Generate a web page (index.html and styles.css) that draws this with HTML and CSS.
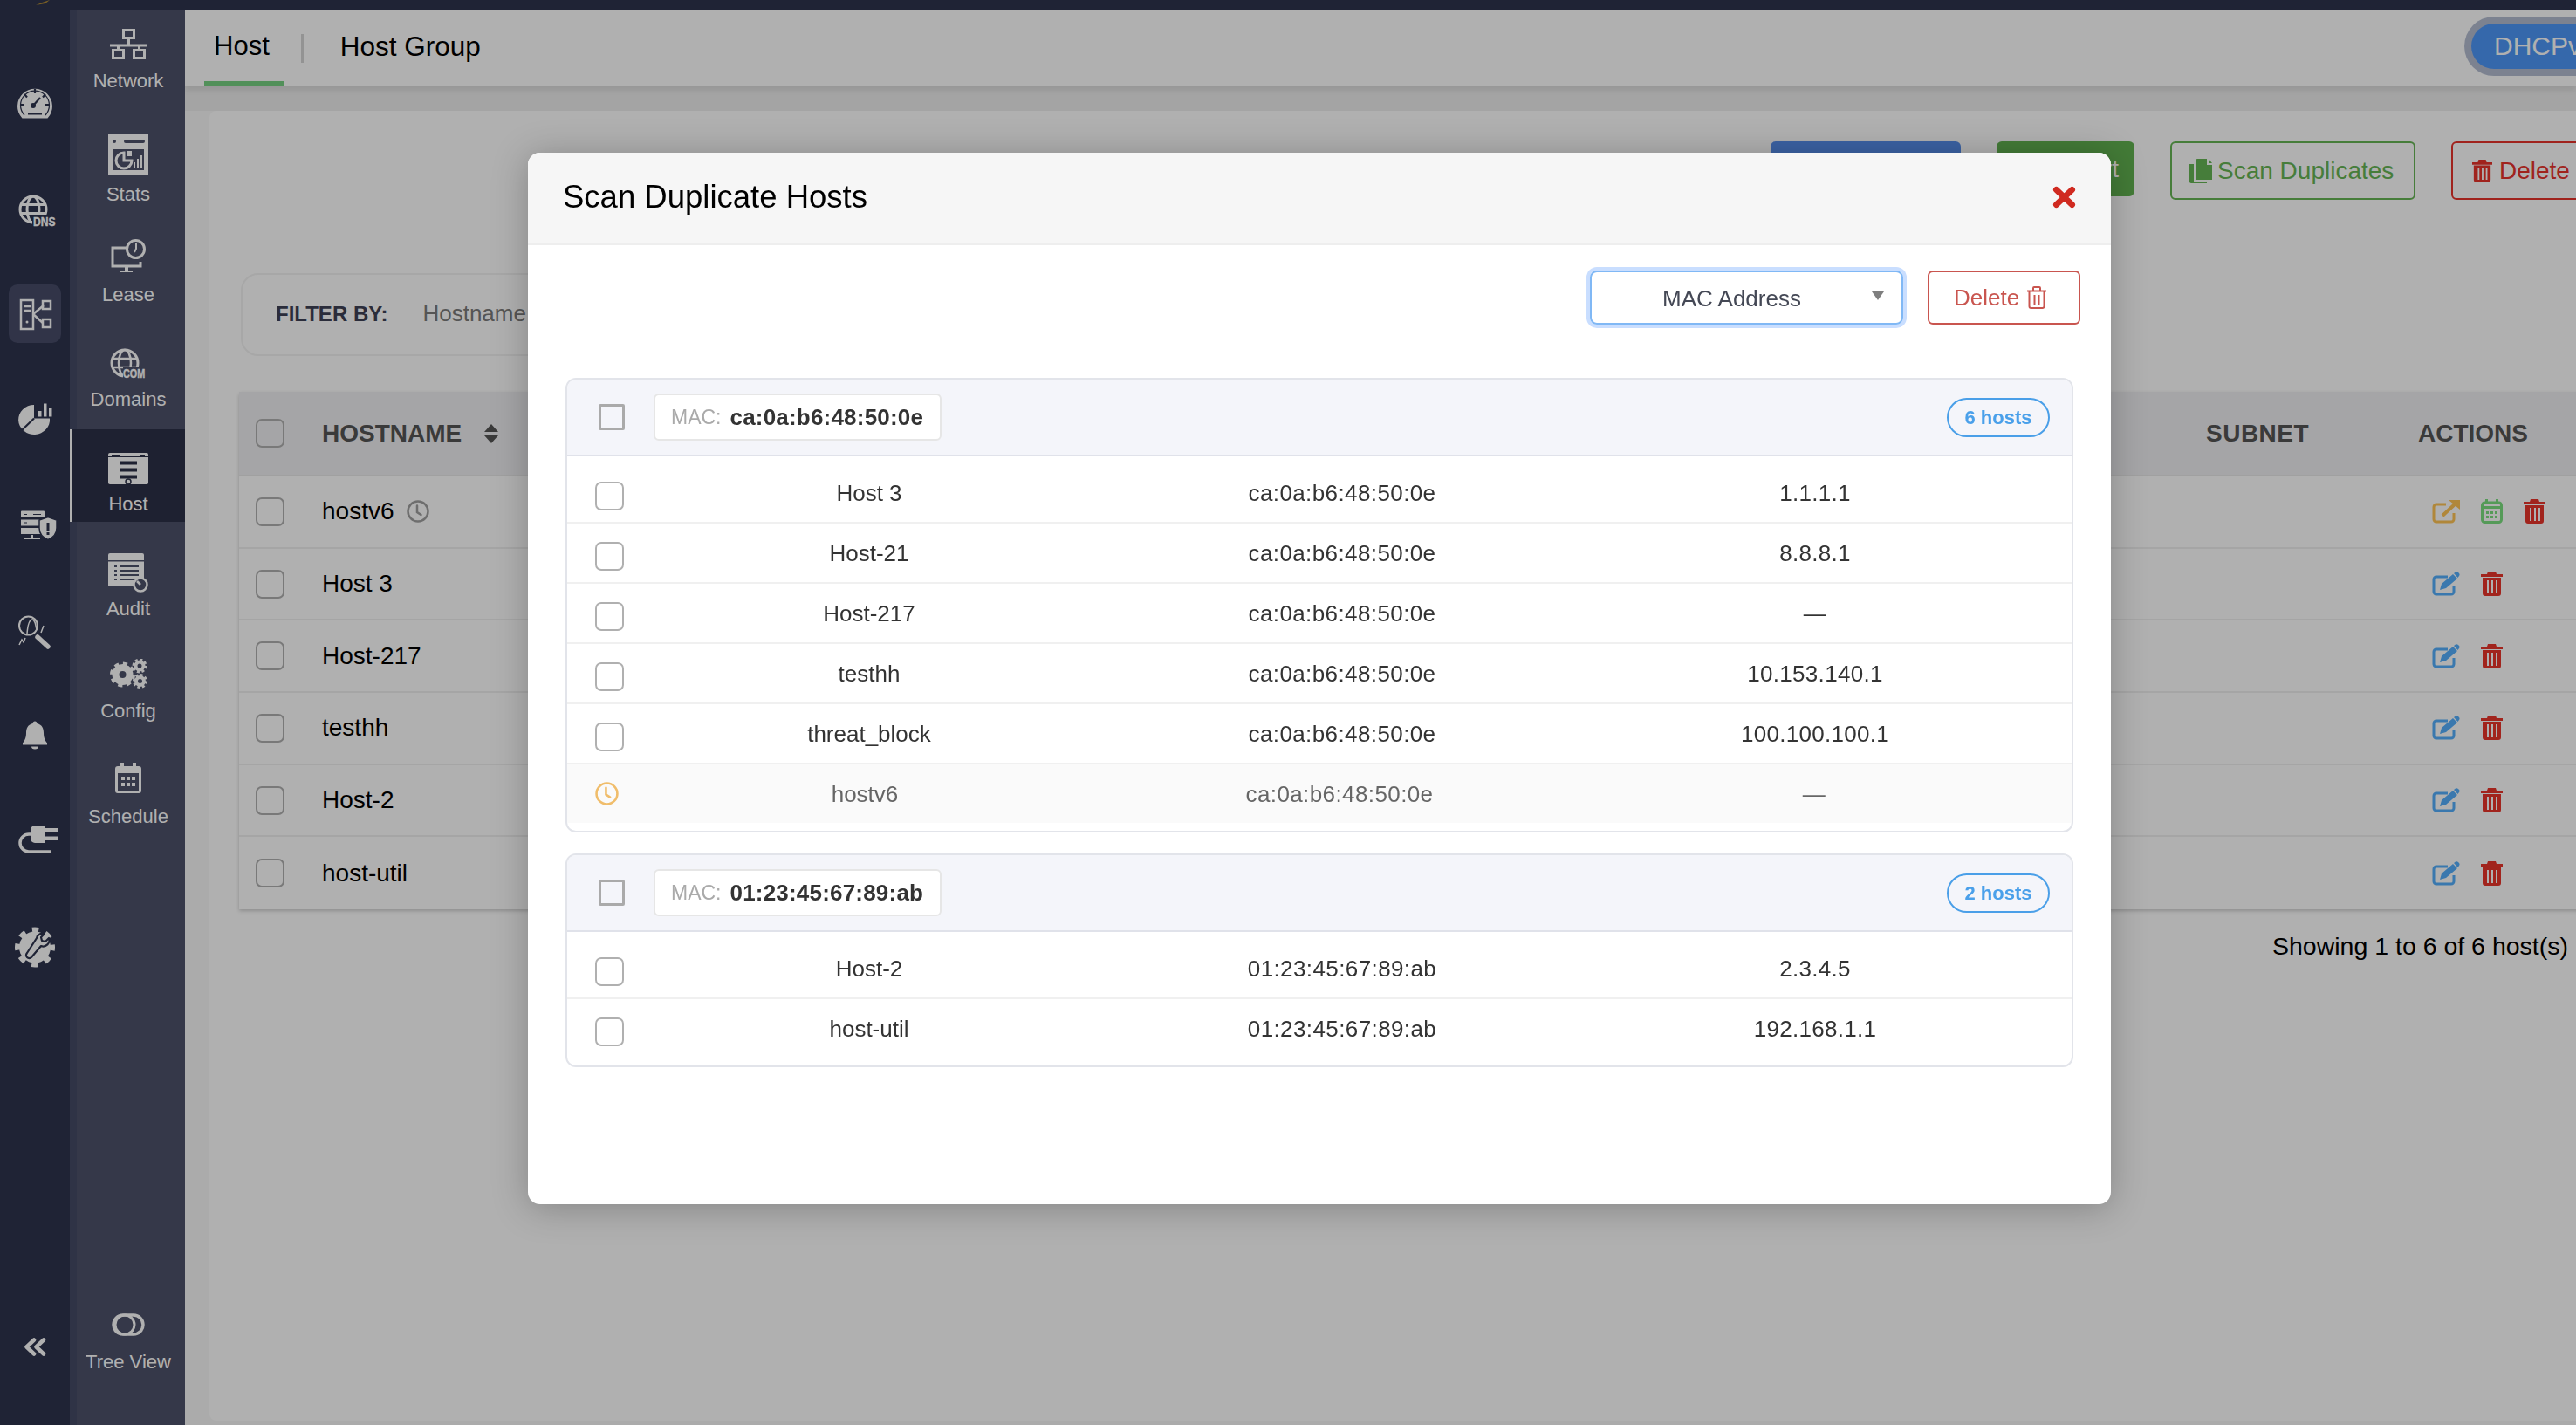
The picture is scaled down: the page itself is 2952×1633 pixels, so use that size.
FILE: index.html
```html
<!DOCTYPE html>
<html lang="en">

<head>
    <meta charset="UTF-8">
    <title>Host</title>
    <link rel="stylesheet" href="styles.css">
</head>

<body>
    <svg class="sprite" xmlns="http://www.w3.org/2000/svg">
        <symbol id="i-trash" viewBox="0 0 25 28">
            <path fill="currentColor" d="M8 0h9l1 3h7v3H0V3h7z"/>
            <path fill="currentColor" fill-rule="evenodd" d="M2 7h21v18a3 3 0 0 1-3 3H5a3 3 0 0 1-3-3zM7 10v15h2V10zM12 10v15h2V10zM17 10v15h2V10z"/>
        </symbol>
        <symbol id="i-edit" viewBox="0 0 32 28">
            <path fill="none" stroke="currentColor" stroke-width="3" d="M18 6H5a3 3 0 0 0-3 3v14a3 3 0 0 0 3 3h17a3 3 0 0 0 3-3v-7"/>
            <path fill="currentColor" d="M9 21l2-7L24 3l5 5-13 11zM25 2l2-1.500c1-.5 2-.5 3 .5l1 1c.8 1 .8 2 0 3l-1.500 2z"/>
        </symbol>
        <symbol id="i-share" viewBox="0 0 32 28">
            <path fill="none" stroke="currentColor" stroke-width="3" d="M16 6H5a3 3 0 0 0-3 3v14a3 3 0 0 0 3 3h17a3 3 0 0 0 3-3v-7"/>
            <path fill="none" stroke="currentColor" stroke-width="4" d="M12 19L26 6"/>
            <path fill="currentColor" d="M19 1h13v11z"/>
        </symbol>
        <symbol id="i-cal" viewBox="0 0 25 28">
            <path fill="currentColor" d="M5 0h3v5H5zM17 0h3v5h-3z"/>
            <rect x="1.500" y="4" width="22" height="22.500" rx="3" fill="none" stroke="currentColor" stroke-width="3"/>
            <path fill="currentColor" d="M2 8h21v3H2zM6 14h3v3H6zM11 14h3v3h-3zM16 14h3v3h-3zM6 19h3v3H6zM11 19h3v3h-3zM16 19h3v3h-3z"/>
        </symbol>
        <symbol id="i-clock" viewBox="0 0 26 26">
            <circle cx="13" cy="13" r="11.500" fill="none" stroke="currentColor" stroke-width="2.500"/>
            <path fill="none" stroke="currentColor" stroke-width="2.500" stroke-linecap="round" d="M12 6.500V14l4.500 3"/>
        </symbol>
        <symbol id="i-check-empty" viewBox="0 0 33 33">
            <rect x="1" y="1" width="31" height="31" rx="6" fill="none" stroke="currentColor" stroke-width="2"/>
        </symbol>
    </svg>

    <div class="topbar">
        <svg class="logo-tip" width="18" height="6" viewBox="0 0 18 6"><path d="M0 6L7 3 16 0 11 4z" fill="#b08a35"/></svg>
    </div>

    <div class="app">
        <!-- rail -->
        <div class="rail">
            <div class="rail-btn">
                <svg class="rail-icon" viewBox="0 0 60 60">
                    <path d="M15.500 47.500a20 20 0 1 1 29 0z" fill="currentColor"/>
                    <path class="knock-line-thin" d="M18 44a16.500 16.500 0 1 1 24 0"/>
                    <path class="knock-line" d="M30 14v5M18 20l3 3.500M42 20l-3 3.500M13 32h5M42 32h5M22 42.500h16"/>
                    <path class="knock-line" d="M28 33l8-9"/>
                    <circle class="knock-fill" cx="28" cy="33" r="3"/>
                </svg>
            </div>
            <div class="rail-btn">
                <svg class="rail-icon" viewBox="0 0 60 60">
                    <circle cx="28" cy="31" r="15" fill="none" stroke="currentColor" stroke-width="3"/>
                    <ellipse cx="28" cy="31" rx="7" ry="15" fill="none" stroke="currentColor" stroke-width="3"/>
                    <path d="M14 25.500h28M14 35.500h28" stroke="currentColor" stroke-width="3"/>
                    <rect class="knock-rail" x="27" y="37" width="27" height="15"/>
                    <text class="icon-word" transform="translate(28 49.500) scale(0.78 1)">DNS</text>
                </svg>
            </div>
            <div class="rail-btn is-active">
                <svg class="rail-icon" viewBox="0 0 60 60">
                    <rect x="14" y="14" width="14" height="33" fill="none" stroke="currentColor" stroke-width="2.500"/>
                    <path d="M17 21h8M17 26h8M28 30L40 20M28 30l11 10" fill="none" stroke="currentColor" stroke-width="2.500"/>
                    <circle cx="21" cy="39" r="1.500" fill="currentColor"/>
                    <rect x="39" y="15" width="9" height="9" fill="none" stroke="currentColor" stroke-width="2.500"/>
                    <rect x="39" y="36" width="9" height="9" fill="none" stroke="currentColor" stroke-width="2.500"/>
                </svg>
            </div>
            <div class="rail-btn">
                <svg class="rail-icon" viewBox="0 0 60 60">
                    <path d="M29 13A18 17 0 1 0 47 28.500H29z" fill="currentColor"/>
                    <path class="knock-line" d="M29 28.500L15 42"/>
                    <path d="M34 20h3.500v6.500H34zM40 11.500h3.500v15H40zM46 16h3.500v10.500H46z" fill="currentColor"/>
                </svg>
            </div>
            <div class="rail-btn">
                <svg class="rail-icon" viewBox="0 0 60 60">
                    <path d="M15 13.500h25a1 1 0 0 1 1 1v6.500H14v-6.500a1 1 0 0 1 1-1zM14 23.500h24l-1 7H14zM14 33h22l2 7H14zM25 41h3v3h8v2H17v-2h8z" fill="currentColor"/>
                    <path class="knock-line-thin" d="M18 17.500h3M28 17.500h9M18 27h3M18 36.500h3"/>
                    <path d="M45 20.500l10 3.500v9c0 7-4 11-10 13.500-6-2.500-10-6.500-10-13.500v-9z" fill="currentColor" stroke="#2d334e" stroke-width="1.500"/>
                    <path class="knock-fill" d="M43.500 27h3v9h-3zM43.500 38h3v3h-3z"/>
                </svg>
            </div>
            <div class="rail-btn">
                <svg class="rail-icon" viewBox="0 0 60 60">
                    <circle cx="22.500" cy="24" r="10.500" fill="none" stroke="currentColor" stroke-width="2"/>
                    <path d="M21 33c1-12 3-16 6-16 3 0 4 6 5 12M12 46l3-6 2 3 2-5M37 32l3-8" fill="none" stroke="currentColor" stroke-width="1.500"/>
                    <path d="M33 37l12 11" stroke="currentColor" stroke-width="5.500" stroke-linecap="round"/>
                </svg>
            </div>
            <div class="rail-btn">
                <svg class="rail-icon" viewBox="0 0 60 60">
                    <path d="M30 12.500c-1.500 0-2.500 1-2.500 2.500-6 1.500-7.500 6-7.500 11 0 6-2 9-4 11.500v2h28v-2c-2-2.500-4-5.500-4-11.500 0-5-1.500-9.500-7.500-11 0-1.500-1-2.500-2.500-2.500z" fill="currentColor"/>
                    <path d="M26 41.500h8a4 3 0 0 1-8 0z" fill="currentColor"/>
                </svg>
            </div>
            <div class="rail-btn">
                <svg class="rail-icon" viewBox="0 0 60 60">
                    <path d="M30 11h12v20H30a5 5 0 0 1-5-5v-10a5 5 0 0 1 5-5zM42 14h14v4.500H42zM42 23.500h14V28H42z" fill="currentColor"/>
                    <path d="M25 21h-2a10 10 0 0 0 0 20h26" fill="none" stroke="currentColor" stroke-width="3.500"/>
                </svg>
            </div>
            <div class="rail-btn">
                <svg class="rail-icon" viewBox="0 0 60 60">
                    <circle cx="30" cy="29.500" r="18" fill="currentColor"/>
                    <circle cx="30" cy="29.500" r="20" fill="none" stroke="currentColor" stroke-width="6" stroke-dasharray="7.500 8.200" stroke-dashoffset="3.750"/>
                    <path d="M32 19a7 7 0 0 1 9-5l-4 4 1 4 4 1 4-4a7 7 0 0 1-9 9L26 41a3.500 3.500 0 0 1-5-5z" fill="currentColor" stroke="#2d334e" stroke-width="2.200" stroke-linejoin="round"/>
                </svg>
            </div>
            <svg class="rail-collapse" width="26" height="21" viewBox="0 0 26 21">
                <path d="M12 2.500L3.500 10.500l8.500 8M23 2.500l-8.500 8 8.500 8" fill="none" stroke="currentColor" stroke-width="4.500" stroke-linecap="round" stroke-linejoin="round"/>
            </svg>
        </div>

        <!-- segundo menu -->
        <div class="subnav">
            <div class="sub-item sub-network">
                <svg width="43" height="35" viewBox="0 0 43 35">
                    <path d="M15.500 1.500h12v9h-12zM3.500 24.500h12v9h-12zM27.500 24.500h12v9h-12z" fill="none" stroke="currentColor" stroke-width="3"/>
                    <path d="M21.500 11v8M0 19h43M9.500 19v6M33.500 19v6" fill="none" stroke="currentColor" stroke-width="3"/>
                </svg>
                <span>Network</span>
            </div>
            <div class="sub-item sub-stats">
                <svg width="46" height="46" viewBox="0 0 46 46">
                    <rect width="46" height="46" fill="currentColor"/>
                    <circle cx="7" cy="8" r="2" class="knock-sub-fill"/>
                    <rect x="18" y="6" width="24" height="4" rx="2" class="knock-sub-fill"/>
                    <rect x="5" y="17" width="36" height="24" class="knock-sub-fill"/>
                    <path d="M18 21a9 9 0 1 0 9 9h-9z" fill="none" stroke="currentColor" stroke-width="3"/>
                    <path d="M21 19h6v6h-6zM29 32h2v7h-2zM33 28h2v11h-2zM37 24h2v15h-2z" fill="currentColor"/>
                </svg>
                <span>Stats</span>
            </div>
            <div class="sub-item sub-lease">
                <svg width="40" height="40" viewBox="0 0 40 40">
                    <path d="M18 10H2v21h32v-5" fill="none" stroke="currentColor" stroke-width="3"/>
                    <path d="M16 32h4v4h5v2h-14v-2h5z" fill="currentColor"/>
                    <circle cx="28.500" cy="11.500" r="10" fill="none" stroke="currentColor" stroke-width="3"/>
                    <path d="M29 5v6l-2 4" fill="none" stroke="currentColor" stroke-width="2"/>
                </svg>
                <span>Lease</span>
            </div>
            <div class="sub-item sub-domains">
                <svg width="42" height="34" viewBox="0 0 42 34">
                    <circle cx="17" cy="16" r="15" fill="none" stroke="currentColor" stroke-width="3"/>
                    <ellipse cx="17" cy="16" rx="7" ry="15" fill="none" stroke="currentColor" stroke-width="2.500"/>
                    <path d="M3 11h28M3 21h28" stroke="currentColor" stroke-width="2.500"/>
                    <rect class="knock-sub-fill" x="15" y="20" width="27" height="14"/>
                    <text class="icon-word" transform="translate(15 33) scale(0.7 1)">COM</text>
                </svg>
                <span>Domains</span>
            </div>
            <div class="sub-item sub-host is-active">
                <svg width="46" height="37" viewBox="0 0 46 37">
                    <rect width="46" height="36" rx="2" fill="currentColor"/>
                    <path class="knock-dark" d="M0 4h46v1H0zM13 9.500h20v4H13zM13 17.500h20v4H13zM13 25.500h20v4H13zM4 2h9v1H4zM36 2h6v1h-6z"/>
                    <circle cx="23" cy="33" r="3" fill="currentColor" stroke="#2c3048" stroke-width="1.500"/>
                </svg>
                <span>Host</span>
            </div>
            <div class="sub-item sub-audit">
                <svg width="46" height="45" viewBox="0 0 46 45">
                    <path d="M2 0h37a2 2 0 0 1 2 2v36H0V2a2 2 0 0 1 2-2z" fill="currentColor"/>
                    <path class="knock-sub-fill" d="M0 8h41v1.500H0zM7 14h3v2H7zM13 14h22v2H13zM7 19h3v2H7zM13 19h22v2H13zM7 24h3v2H7zM13 24h22v2H13zM7 29h3v2H7zM13 29h22v2H13z"/>
                    <circle cx="37" cy="36" r="7.500" class="knock-sub-fill" stroke="currentColor" stroke-width="2.500"/>
                    <path d="M33 32l4 4" stroke="currentColor" stroke-width="2.500"/>
                </svg>
                <span>Audit</span>
            </div>
            <div class="sub-item sub-config">
                <svg width="43" height="34" viewBox="0 0 43 34">
                    <circle cx="14.500" cy="18" r="8" fill="none" stroke="currentColor" stroke-width="8"/>
                    <circle cx="14.500" cy="18" r="12.500" fill="none" stroke="currentColor" stroke-width="4" stroke-dasharray="5 4.820"/>
                    <circle cx="34" cy="8" r="4.500" fill="none" stroke="currentColor" stroke-width="4"/>
                    <circle cx="34" cy="8" r="7" fill="none" stroke="currentColor" stroke-width="3" stroke-dasharray="3 2.500"/>
                    <circle cx="34.500" cy="25.500" r="4.500" fill="none" stroke="currentColor" stroke-width="4"/>
                    <circle cx="34.500" cy="25.500" r="7" fill="none" stroke="currentColor" stroke-width="3" stroke-dasharray="3 2.500"/>
                </svg>
                <span>Config</span>
            </div>
            <div class="sub-item sub-schedule">
                <svg width="30" height="35" viewBox="0 0 30 35">
                    <path d="M6 0h4v4h10V0h4v4h3a3 3 0 0 1 3 3v25a3 3 0 0 1-3 3H3a3 3 0 0 1-3-3V7a3 3 0 0 1 3-3h3z" fill="currentColor"/>
                    <rect class="knock-sub-fill" x="3" y="12" width="24" height="20"/>
                    <path d="M7 16h4v4H7zM13 16h4v4h-4zM19 16h4v4h-4zM7 23h4v4H7zM13 23h4v4h-4zM19 23h4v4h-4z" fill="currentColor"/>
                </svg>
                <span>Schedule</span>
            </div>
            <div class="sub-item sub-tree">
                <svg width="38" height="26" viewBox="0 0 38 26">
                    <rect x="2" y="2" width="34" height="22" rx="11" fill="none" stroke="currentColor" stroke-width="3.500"/>
                    <circle cx="15" cy="13" r="11" fill="none" stroke="currentColor" stroke-width="3"/>
                </svg>
                <span>Tree View</span>
            </div>
        </div>

        <div class="main">
            <div class="header">
                <div class="tab tab-active">Host</div>
                <div class="tab-sep"></div>
                <div class="tab tab-group">Host Group</div>
                <div class="pill">DHCPv4</div>
            </div>

            <div class="panel">
                <div class="toolbar">
                    <div class="btn btn-blue">Add Host</div>
                    <div class="btn btn-green">Import</div>
                    <div class="btn btn-line-green">
                        <svg width="26" height="28" viewBox="0 0 26 28"><path d="M9 0h11v7h6v17H7V2a2 2 0 0 1 2-2zM22 0l4 5h-4zM0 6h5v20h15v2H2a2 2 0 0 1-2-2z" fill="currentColor"/></svg>
                        Scan Duplicates
                    </div>
                    <div class="btn btn-line-red">
                        <svg width="23" height="28"><use href="#i-trash"/></svg>
                        Delete
                    </div>
                </div>

                <div class="filter">
                    <b>FILTER BY:</b>
                    <span>Hostname</span>
                </div>

                <div class="hosts">
                    <div class="t-row t-head">
                        <div><svg class="check"><use href="#i-check-empty"/></svg></div>
                        <div class="sort-cell">HOSTNAME
                            <svg width="16" height="22" viewBox="0 0 16 22"><path d="M8 0l8 9H0zM0 13h16l-8 9z" fill="currentColor"/></svg>
                        </div>
                        <div class="th-subnet">SUBNET</div>
                        <div>ACTIONS</div>
                    </div>
                    <div class="t-row">
                        <div><svg class="check"><use href="#i-check-empty"/></svg></div>
                        <div class="name-cell">hostv6 <svg class="name-clock"><use href="#i-clock"/></svg></div>
                        <div></div>
                        <div class="actions">
                            <svg class="act-wide a-orange"><use href="#i-share"/></svg>
                            <svg class="act a-green"><use href="#i-cal"/></svg>
                            <svg class="act a-red"><use href="#i-trash"/></svg>
                        </div>
                    </div>
                    <div class="t-row">
                        <div><svg class="check"><use href="#i-check-empty"/></svg></div>
                        <div>Host 3</div>
                        <div></div>
                        <div class="actions">
                            <svg class="act-wide a-blue"><use href="#i-edit"/></svg>
                            <svg class="act a-red"><use href="#i-trash"/></svg>
                        </div>
                    </div>
                    <div class="t-row">
                        <div><svg class="check"><use href="#i-check-empty"/></svg></div>
                        <div>Host-217</div>
                        <div></div>
                        <div class="actions">
                            <svg class="act-wide a-blue"><use href="#i-edit"/></svg>
                            <svg class="act a-red"><use href="#i-trash"/></svg>
                        </div>
                    </div>
                    <div class="t-row">
                        <div><svg class="check"><use href="#i-check-empty"/></svg></div>
                        <div>testhh</div>
                        <div></div>
                        <div class="actions">
                            <svg class="act-wide a-blue"><use href="#i-edit"/></svg>
                            <svg class="act a-red"><use href="#i-trash"/></svg>
                        </div>
                    </div>
                    <div class="t-row">
                        <div><svg class="check"><use href="#i-check-empty"/></svg></div>
                        <div>Host-2</div>
                        <div></div>
                        <div class="actions">
                            <svg class="act-wide a-blue"><use href="#i-edit"/></svg>
                            <svg class="act a-red"><use href="#i-trash"/></svg>
                        </div>
                    </div>
                    <div class="t-row">
                        <div><svg class="check"><use href="#i-check-empty"/></svg></div>
                        <div>host-util</div>
                        <div></div>
                        <div class="actions">
                            <svg class="act-wide a-blue"><use href="#i-edit"/></svg>
                            <svg class="act a-red"><use href="#i-trash"/></svg>
                        </div>
                    </div>
                </div>
                <div class="showing">Showing 1 to 6 of 6 host(s)</div>
            </div>
        </div>
    </div>

    <div class="backdrop"></div>

    <!-- modal -->
    <div class="modal">
        <div class="modal-header">
            <h2>Scan Duplicate Hosts</h2>
            <svg class="modal-close" width="27" height="26" viewBox="0 0 27 26">
                <path d="M4.500 4.500l18 17M22.500 4.500l-18 17" fill="none" stroke="currentColor" stroke-width="7" stroke-linecap="round"/>
            </svg>
        </div>
        <div class="modal-body">
            <div class="modal-tools">
                <div class="select">MAC Address<i class="caret"></i></div>
                <div class="btn-delete">Delete
                    <svg width="24" height="26" viewBox="0 0 24 26">
                        <path d="M1 5.500h22M8 5V2a1 1 0 0 1 1-1h6a1 1 0 0 1 1 1v3M3.500 6v17a2 2 0 0 0 2 2h13a2 2 0 0 0 2-2V6M9.500 10v11M14.500 10v11" fill="none" stroke="currentColor" stroke-width="2"/>
                    </svg>
                </div>
            </div>

            <div class="dup-group">
                <div class="dup-head">
                    <i class="head-check"></i>
                    <div class="chip"><span>MAC:</span><b>ca:0a:b6:48:50:0e</b></div>
                    <div class="count">6 hosts</div>
                </div>
                <div class="dup-rows">
                    <div class="dup-row"><svg class="check"><use href="#i-check-empty"/></svg><div>Host 3</div><div>ca:0a:b6:48:50:0e</div><div>1.1.1.1</div></div>
                    <div class="dup-row"><svg class="check"><use href="#i-check-empty"/></svg><div>Host-21</div><div>ca:0a:b6:48:50:0e</div><div>8.8.8.1</div></div>
                    <div class="dup-row"><svg class="check"><use href="#i-check-empty"/></svg><div>Host-217</div><div>ca:0a:b6:48:50:0e</div><div>—</div></div>
                    <div class="dup-row"><svg class="check"><use href="#i-check-empty"/></svg><div>testhh</div><div>ca:0a:b6:48:50:0e</div><div>10.153.140.1</div></div>
                    <div class="dup-row"><svg class="check"><use href="#i-check-empty"/></svg><div>threat_block</div><div>ca:0a:b6:48:50:0e</div><div>100.100.100.1</div></div>
                    <div class="dup-row is-pending"><svg class="pending-clock"><use href="#i-clock"/></svg><div>hostv6</div><div>ca:0a:b6:48:50:0e</div><div>—</div></div>
                </div>
            </div>

            <div class="dup-group">
                <div class="dup-head">
                    <i class="head-check"></i>
                    <div class="chip"><span>MAC:</span><b>01:23:45:67:89:ab</b></div>
                    <div class="count">2 hosts</div>
                </div>
                <div class="dup-rows">
                    <div class="dup-row"><svg class="check"><use href="#i-check-empty"/></svg><div>Host-2</div><div>01:23:45:67:89:ab</div><div>2.3.4.5</div></div>
                    <div class="dup-row"><svg class="check"><use href="#i-check-empty"/></svg><div>host-util</div><div>01:23:45:67:89:ab</div><div>192.168.1.1</div></div>
                </div>
            </div>
        </div>
    </div>
</body>

</html>
```

FILE: styles.css
```css
/* Reset */
* {
    box-sizing: border-box;
}

html,
body {
    margin: 0;
    height: 100%;
    overflow: hidden;
}

body {
    font-family: "Liberation Sans", Arial, sans-serif;
    color: #000;
    background-color: #f8f8f8;
}

.sprite {
    display: none;
}

svg {
    flex: none;
    display: block;
}

/* Barra do topo */
.topbar {
    height: 11px;
    background-color: #2d334e;
    position: relative;
}

.logo-tip {
    position: absolute;
    left: 41px;
    top: 0;
}

.app {
    display: flex;
    height: 1622px;
}

/* Rail */
.rail {
    width: 80px;
    flex: none;
    background-color: #2d334e;
    color: #fff;
    display: flex;
    flex-direction: column;
    align-items: center;
    padding-top: 46px;
    padding-bottom: 79px;
}

.rail-btn {
    width: 60px;
    height: 121px;
    display: flex;
    align-items: center;
    justify-content: center;
    position: relative;
}

.rail-btn.is-active::before {
    content: '';
    position: absolute;
    left: 0;
    top: 27px;
    width: 60px;
    height: 67px;
    border-radius: 10px;
    background-color: #474c69;
}

.rail-icon {
    width: 60px;
    height: 60px;
    position: relative;
}

.rail-collapse {
    margin-top: auto;
}

.icon-word {
    font-family: "Liberation Sans", sans-serif;
    font-weight: 700;
    font-size: 15.500px;
    fill: currentColor;
    stroke: currentColor;
    stroke-width: 0.4;
}

.knock-rail,
.knock-fill {
    fill: #2d334e;
}

.knock-line {
    stroke: #2d334e;
    stroke-width: 2.2;
    fill: none;
}

.knock-line-thin {
    stroke: #2d334e;
    stroke-width: 1.2;
    fill: none;
}

/* Segundo menu */
.subnav {
    width: 132px;
    flex: none;
    background: linear-gradient(90deg, #454a66 0, #454a66 8px, #4d516a 8px);
    color: #fff;
    display: flex;
    flex-direction: column;
    font-size: 22px;
}

.sub-item {
    display: flex;
    flex-direction: column;
    align-items: center;
    line-height: 26px;
    padding-left: 2px;
}

.sub-network {
    height: 122px;
    padding-top: 22px;
}

.sub-network svg {
    margin-bottom: 12px;
}

.sub-stats {
    height: 125px;
    padding-top: 21px;
}

.sub-stats svg {
    margin-bottom: 10px;
}

.sub-lease {
    height: 117px;
    padding-top: 16px;
}

.sub-lease svg {
    margin-bottom: 11px;
}

.sub-domains {
    height: 117px;
    padding-top: 25px;
}

.sub-domains svg {
    margin-bottom: 11px;
    overflow: visible;
}

.sub-host {
    height: 106px;
    padding-top: 27px;
}

.sub-host svg {
    margin-bottom: 9px;
}

.sub-item.is-active {
    background-color: #2c3048;
    border-left: 3px solid #fff;
    padding-left: 0;
    padding-right: 1px;
}

.sub-audit {
    height: 137px;
    padding-top: 36px;
}

.sub-audit svg {
    margin-bottom: 6px;
}

.sub-config {
    height: 120px;
    padding-top: 20px;
}

.sub-config svg {
    margin-bottom: 13px;
}

.sub-schedule {
    height: 130px;
    padding-top: 19px;
}

.sub-schedule svg {
    margin-bottom: 14px;
}

.sub-tree {
    margin-top: auto;
    padding-bottom: 59px;
}

.sub-tree svg {
    margin-bottom: 17px;
}

.knock-sub-fill {
    fill: #4d516a;
}

.knock-dark {
    fill: #2c3048;
}

/* Conteudo */
.main {
    flex: 1;
    min-width: 0;
    overflow: hidden;
    background: linear-gradient(#eeeeee 0, #eeeeee 116px, #f8f8f8 116px);
}

.header {
    height: 88px;
    background-color: #fff;
    display: flex;
    align-items: center;
    padding-left: 22px;
    font-size: 31.500px;
    box-shadow: 0 5px 6px rgba(0, 0, 0, 0.08);
    position: relative;
}

.tab {
    height: 88px;
    line-height: 84px;
    padding: 0 17px 0 11px;
    white-space: nowrap;
}

.tab-active {
    border-bottom: 6px solid #77d183;
    font-size: 31px;
}

.tab-sep {
    width: 3px;
    height: 33px;
    margin-left: 19px;
    background-color: #d5d5d5;
}

.tab-group {
    margin-left: 31px;
}

.pill {
    margin-left: auto;
    margin-right: -50px;
    margin-bottom: 4px;
    width: 170px;
    height: 52px;
    border-radius: 26px;
    background-color: #4e97f8;
    box-shadow: 0 0 0 8px #b4bdd1;
    color: #fff;
    font-size: 30px;
    line-height: 52px;
    padding-left: 26px;
}

.panel {
    width: 2769px;
    height: 1501px;
    margin: 28px 0 0 28px;
    padding: 35px 34px 0;
    background-color: #fff;
    border-radius: 8px;
}

.toolbar {
    display: flex;
    justify-content: flex-end;
    align-items: flex-start;
    gap: 41px;
    font-size: 28px;
}

.btn {
    height: 67px;
    border-radius: 6px;
    display: flex;
    align-items: center;
    gap: 8px;
    padding: 0 22px;
    white-space: nowrap;
}

.btn-blue {
    width: 218px;
    height: 63px;
    justify-content: center;
    color: #fff;
    background-color: #568eec;
}

.btn-green {
    width: 158px;
    height: 63px;
    justify-content: flex-end;
    padding-right: 18px;
    color: #fff;
    background-color: #61b250;
}

.btn-line-green {
    width: 281px;
    gap: 6px;
    padding-left: 20px;
    color: #66b555;
    border: 2px solid #66b555;
}

.btn-line-red {
    width: 166px;
    color: #e8332b;
    border: 2px solid #e8332b;
}

.filter {
    width: 1000px;
    height: 95px;
    margin: 84px 0 0 2px;
    padding: 0 0 2px 38px;
    display: flex;
    align-items: center;
    gap: 40px;
    border: 2px solid #f2f2f2;
    border-radius: 20px;
}

.filter b {
    font-size: 24px;
    color: #3d4154;
}

.filter span {
    font-size: 26px;
    color: #7b7b7b;
}

.hosts {
    margin-top: 41px;
    font-size: 28px;
    box-shadow: 0 2px 4px rgba(0, 0, 0, 0.2);
    border-radius: 4px 4px 0 0;
}

.t-row {
    display: grid;
    grid-template-columns: 95px 2159px 243px 1fr;
    align-items: center;
    height: 82.700px;
    border-bottom: 2px solid #f0f0f0;
}

.t-row:last-child {
    border-bottom: 0;
}

.t-row>div:first-child {
    padding-left: 19px;
}

.t-head {
    height: 97px;
    background-color: #f0f0f2;
    border-bottom: 2px solid #e8e8e8;
    font-weight: 700;
    color: #555;
}

.th-subnet {
    letter-spacing: 0.5px;
}

.check {
    width: 33px;
    height: 33px;
    color: #b0b0b0;
}

.sort-cell {
    display: flex;
    align-items: center;
    gap: 26px;
}

.name-cell {
    display: flex;
    align-items: center;
    gap: 14px;
}

.name-clock {
    width: 26px;
    height: 26px;
    color: #a0a0a0;
}

.actions {
    display: flex;
    align-items: center;
    gap: 24px;
    padding-left: 16px;
}

.act {
    width: 25px;
    height: 28px;
}

.act-wide {
    width: 32px;
    height: 28px;
}

.a-orange {
    color: #ffc454;
}

.a-green {
    color: #7bdf80;
}

.a-red {
    color: #ea352a;
}

.a-blue {
    color: #54affc;
}

.showing {
    margin-top: 26px;
    padding-right: 32px;
    text-align: right;
    font-size: 28.500px;
}

/* Modal */
.backdrop {
    position: fixed;
    inset: 0;
    background: rgba(0, 0, 0, 0.31);
}

.modal {
    position: absolute;
    left: 605px;
    top: 175px;
    width: 1814px;
    height: 1205px;
    background-color: #fff;
    border-radius: 14px;
    box-shadow: 0 4px 40px rgba(0, 0, 0, 0.25);
    overflow: hidden;
}

.modal-header {
    height: 106px;
    background-color: #f6f6f6;
    border-bottom: 2px solid #eeeeee;
    display: flex;
    align-items: center;
    justify-content: space-between;
    padding: 0 40px 3px;
}

.modal-header h2 {
    margin: 0;
    font-size: 36.500px;
    font-weight: 400;
}

.modal-close {
    color: #d02a20;
}

.modal-body {
    padding: 29px 35px 0 43px;
}

.modal-tools {
    display: flex;
    justify-content: flex-end;
    gap: 28px;
    margin-bottom: 61px;
}

.select {
    width: 359px;
    height: 62px;
    display: flex;
    align-items: center;
    padding: 2px 20px 0 81px;
    font-size: 26px;
    color: #444855;
    border: 2px solid #80b8f5;
    border-radius: 8px;
    box-shadow: 0 0 0 4px #c9deff;
}

.caret {
    margin-left: auto;
    margin-bottom: 6px;
    width: 0;
    height: 0;
    border-left: 7px solid transparent;
    border-right: 7px solid transparent;
    border-top: 10px solid #7f7f7f;
}

.btn-delete {
    width: 175px;
    height: 62px;
    display: flex;
    align-items: center;
    gap: 8px;
    padding-left: 28px;
    font-size: 26px;
    color: #c9554f;
    border: 2px solid #c9554f;
    border-radius: 6px;
}

.dup-group {
    width: 1728px;
    border: 2px solid #e2e4ea;
    border-radius: 12px;
    margin-bottom: 24px;
    overflow: hidden;
}

.dup-head {
    height: 88px;
    display: flex;
    align-items: center;
    background-color: #f4f5fa;
    border-bottom: 2px solid #e0e2ea;
    padding: 0 25px 0 36px;
}

.head-check {
    width: 30px;
    height: 30px;
    border: 3px solid #aaa;
    border-radius: 2px;
    margin-right: 33px;
}

.chip {
    height: 54px;
    width: 330px;
    display: flex;
    align-items: center;
    gap: 10px;
    padding-left: 18px;
    background-color: #fff;
    border: 2px solid #e6e6e6;
    border-radius: 6px;
}

.chip span {
    font-size: 23px;
    color: #aaa;
}

.chip b {
    font-size: 26px;
    letter-spacing: 0.2px;
    color: #333;
}

.count {
    margin-left: auto;
    height: 45px;
    width: 118px;
    text-align: center;
    line-height: 41px;
    font-size: 22px;
    font-weight: 700;
    color: #4aa0ea;
    border: 2px solid #4a9fe8;
    border-radius: 23px;
}

.dup-rows {
    padding: 8px 0 9px;
}

.dup-row {
    display: flex;
    align-items: center;
    height: 69px;
    padding: 0 23px 0 32px;
    font-size: 26px;
    color: #333;
    border-bottom: 2px solid #f0f0f0;
}

.dup-row:last-child {
    height: 67px;
    border-bottom: 0;
}

.dup-row>div {
    flex: 1;
    text-align: center;
    padding-top: 1px;
}

.dup-row>div:nth-of-type(2) {
    letter-spacing: 0.4px;
}

.dup-row>div:nth-of-type(3) {
    letter-spacing: 0.3px;
}

.dup-row .check {
    margin: 8px 10px 0 0;
}

.is-pending {
    color: #666;
    background-color: #fafafa;
}

.pending-clock {
    width: 27px;
    height: 27px;
    margin-right: 10px;
    color: #f0bd6b;
}
```
